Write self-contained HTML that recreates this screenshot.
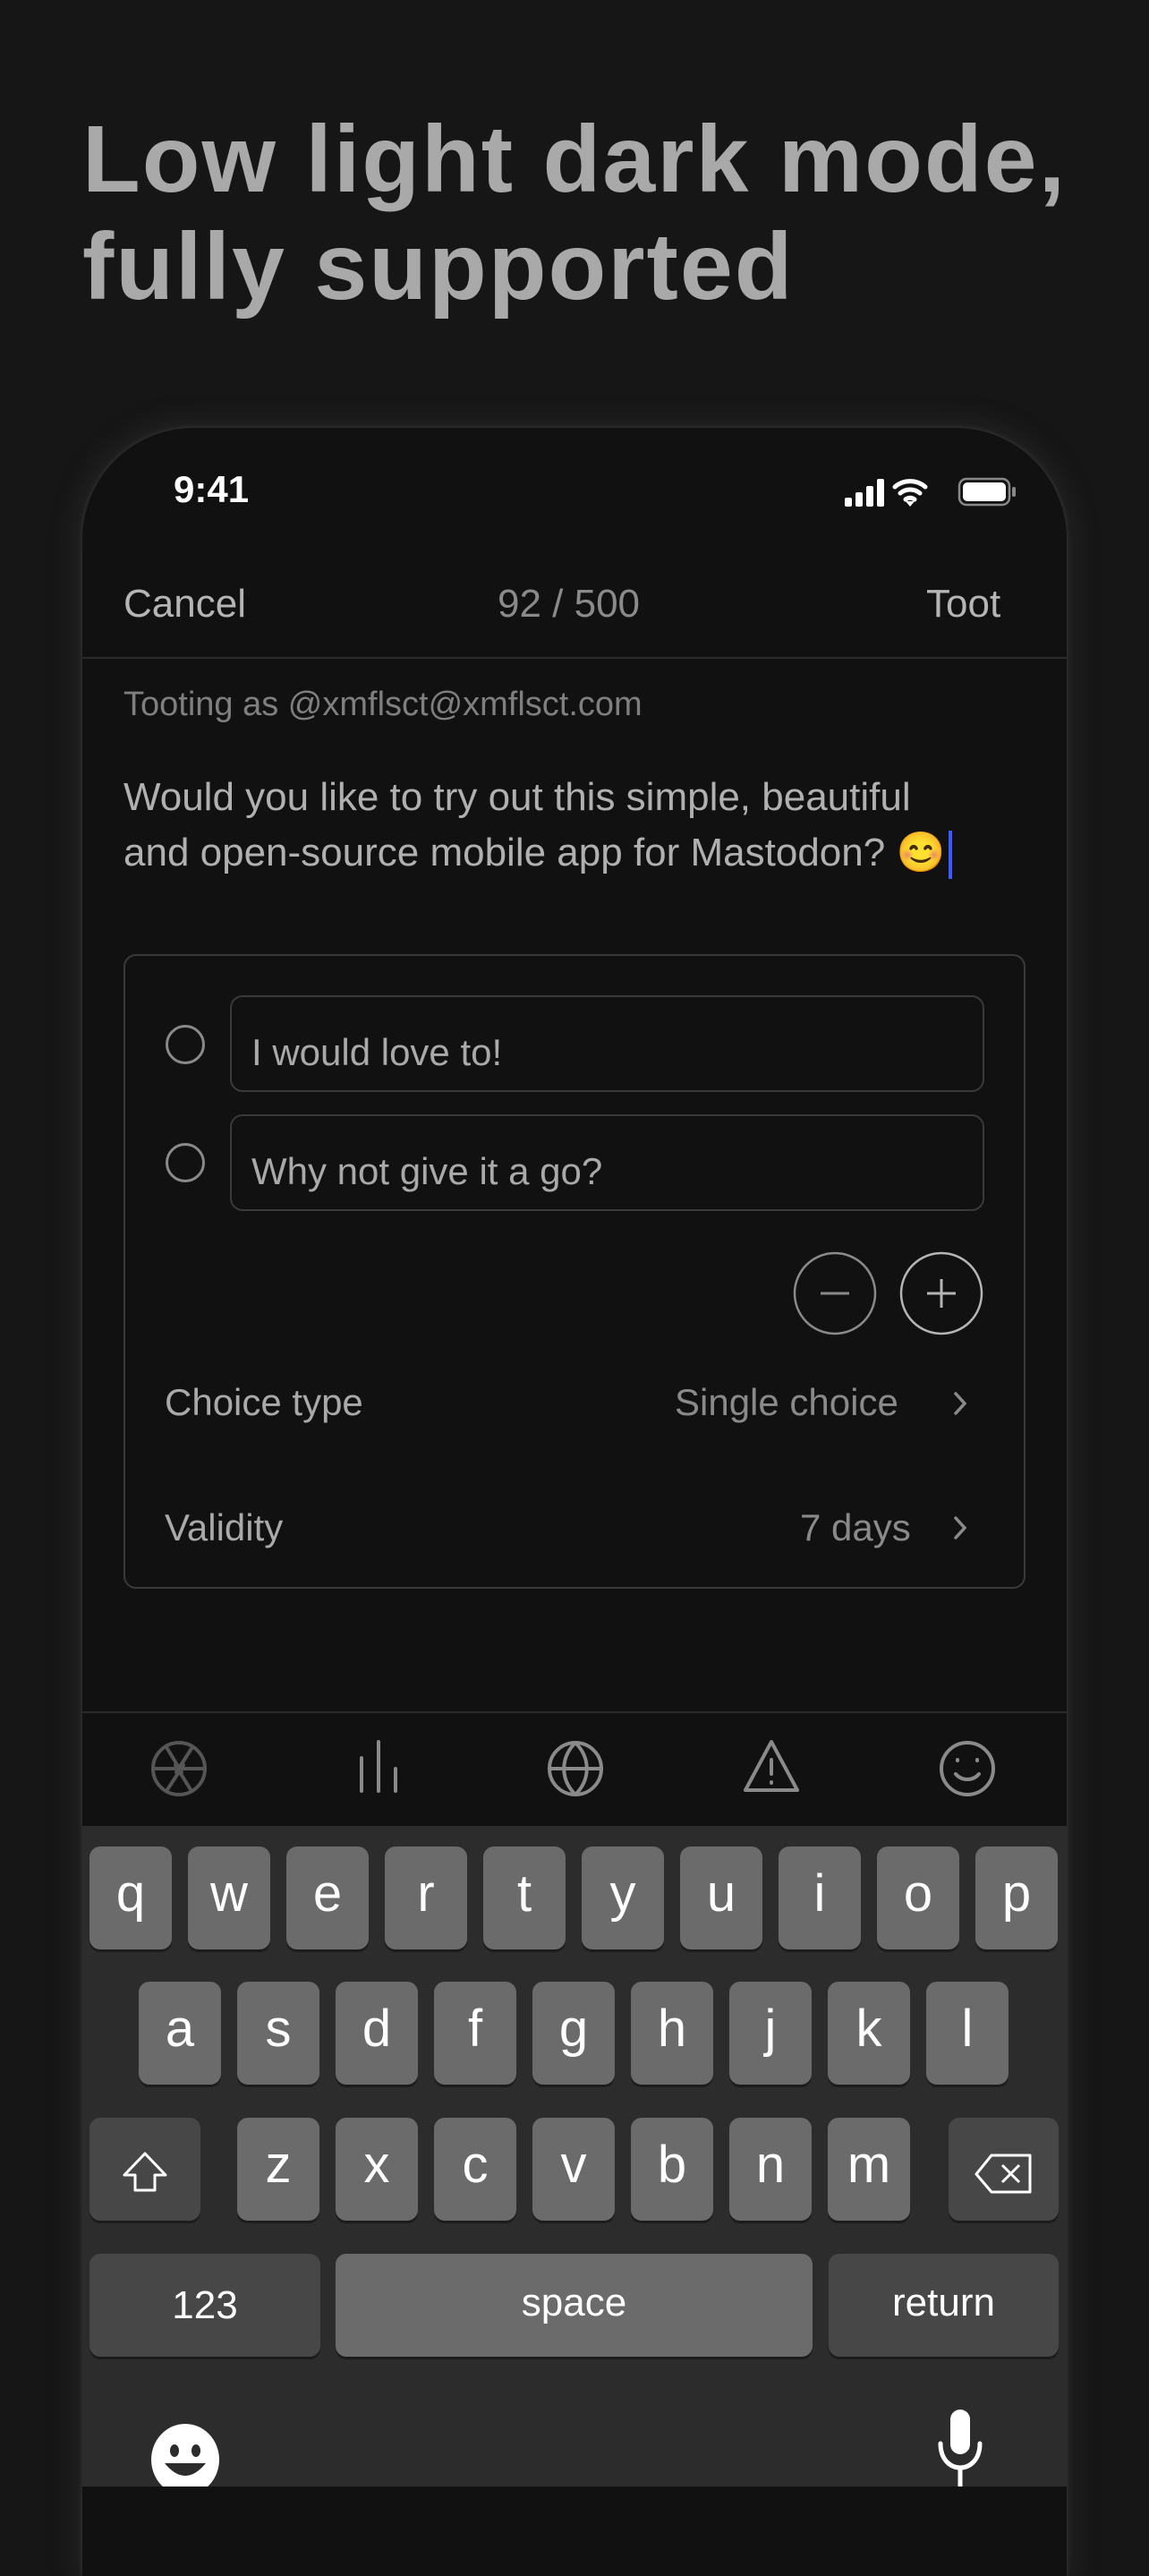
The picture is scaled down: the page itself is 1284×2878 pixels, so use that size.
<!DOCTYPE html>
<html><head><meta charset="utf-8"><style>
*{margin:0;padding:0;box-sizing:border-box}
body{width:1284px;height:2778px;background:#161616;overflow:hidden;position:relative;font-family:"Liberation Sans",sans-serif}
.abs{position:absolute}
h1{position:absolute;left:92px;top:118px;font-size:106px;line-height:120px;font-weight:bold;color:#a9a9a9;letter-spacing:2px}
.phone{position:absolute;left:92px;top:478px;width:1100px;height:2400px;background:#111;border-radius:124px 124px 0 0;box-shadow:0 0 30px 6px rgba(70,70,70,.35),0 0 4px 1px #2e2e2e}
.t{position:absolute;color:#a9a9a9;font-size:44px;white-space:nowrap}
.inp{position:absolute;left:257px;width:843px;height:108px;border:2px solid #3a3a3a;border-radius:14px}
.radio{position:absolute;left:185px;width:44px;height:44px;border:3px solid #8a8a8a;border-radius:50%}
.key{position:absolute;width:92px;height:115px;background:#6b6b6b;border-radius:12px;box-shadow:0 3px 0 #1c1c1c;color:#fff;font-size:58px;text-align:center;line-height:105px}
.sp{background:#474747}
</style></head><body>
<h1>Low light dark mode,<br>fully supported</h1>
<div class="phone"></div>
<div class="t" style="left:194px;top:523px;color:#fff;font-weight:bold;font-size:42px">9:41</div>
<svg class="abs" style="left:944px;top:532px" width="200" height="36" viewBox="0 0 200 36">
<rect x="0" y="24" width="8" height="10" rx="2" fill="#fff"/><rect x="12" y="18" width="8" height="16" rx="2" fill="#fff"/><rect x="24" y="11" width="8" height="23" rx="2" fill="#fff"/><rect x="36" y="3" width="8" height="31" rx="2" fill="#fff"/>
<path d="M56 12 A26 26 0 0 1 90 12 M62 19 A17 17 0 0 1 84 19 M68 26 A8 8 0 0 1 78 26" stroke="#fff" stroke-width="5" fill="none" stroke-linecap="round"/><path d="M68 28 L73 34 L78 28Z" fill="#fff"/>
<rect x="128" y="3" width="56" height="29" rx="8" fill="none" stroke="#888" stroke-width="2.5"/><rect x="132" y="7" width="48" height="21" rx="5" fill="#fff"/><rect x="187" y="12" width="4" height="11" rx="2" fill="#888"/>
</svg>
<div class="t" style="left:138px;top:650px;color:#b5b5b5">Cancel</div>
<div class="t" style="left:556px;top:650px;color:#8a8a8a">92 / 500</div>
<div class="t" style="left:1035px;top:650px;color:#b5b5b5">Toot</div>
<div class="abs" style="left:92px;top:734px;width:1100px;height:2px;background:#2a2a2a"></div>
<div class="t" style="left:138px;top:766px;font-size:38px;color:#7f7f7f">Tooting as @xmflsct@xmflsct.com</div>
<div class="t" style="left:138px;top:860px;line-height:62px;color:#b0b0b0">Would you like to try out this simple, beautiful<br>and open-source mobile app for Mastodon? <span style="font-size:44px">😊</span><span style="display:inline-block;width:4px;height:54px;background:#3b5bff;vertical-align:middle;margin-left:4px"></span></div>
<div class="abs" style="left:138px;top:1066px;width:1008px;height:709px;border:2px solid #3a3a3a;border-radius:14px"></div>
<div class="radio" style="top:1145px"></div><div class="inp" style="top:1112px"></div>
<div class="t" style="left:281px;top:1152px;font-size:42px;color:#a9a9a9">I would love to!</div>
<div class="radio" style="top:1277px"></div><div class="inp" style="top:1245px"></div>
<div class="t" style="left:281px;top:1285px;font-size:42px;color:#a9a9a9">Why not give it a go?</div>
<svg class="abs" style="left:884px;top:1396px" width="220" height="100"><circle cx="49" cy="49" r="45" fill="none" stroke="#8a8a8a" stroke-width="2.5"/><path d="M33 49H65" stroke="#8a8a8a" stroke-width="3"/><circle cx="168" cy="49" r="45" fill="none" stroke="#b5b5b5" stroke-width="2.5"/><path d="M152 49H184M168 33V65" stroke="#b5b5b5" stroke-width="3"/></svg>
<div class="t" style="left:184px;top:1543px;font-size:42px">Choice type</div>
<div class="t" style="left:754px;top:1543px;font-size:42px;color:#8a8a8a">Single choice</div>
<div class="t" style="left:184px;top:1683px;font-size:42px">Validity</div>
<div class="t" style="left:894px;top:1683px;font-size:42px;color:#8a8a8a">7 days</div>
<svg class="abs" style="left:1062px;top:1552px" width="24" height="180"><path d="M6 5L16 16L6 27M6 144L16 155L6 166" stroke="#8a8a8a" stroke-width="3.5" fill="none" stroke-linecap="round"/></svg>
<div class="abs" style="left:92px;top:1912px;width:1100px;height:2px;background:#2a2a2a"></div>
<svg class="abs" style="left:92px;top:1914px" width="1100" height="126" viewBox="0 0 1100 126">
<g fill="none" stroke-width="4" stroke-linecap="round" stroke-linejoin="round">
<g stroke="#555"><circle cx="108" cy="62" r="29"/><path d="M94 38L111 66M123 38L105 66M135 62H102M122 87L104 58M94 87L113 58M81 62H114"/></g>
<g stroke="#8a8a8a"><path d="M312 50V87M331 32V87M350 62V87"/><circle cx="551" cy="62" r="29"/><path d="M522 62H580M551 33C534 50 534 74 551 91M551 33C568 50 568 74 551 91"/>
<path d="M770 32L741 86H799Z"/><path d="M770 52V68M770 77V78"/>
<circle cx="989" cy="62" r="29"/><path d="M976 68C983 76 995 76 1002 68M978 52V53M1000 52V53"/></g></g></svg>
<div class="abs" style="left:92px;top:2040px;width:1100px;height:738px;background:#2c2c2c"></div>
<div class="key" style="left:100px;top:2063px">q</div><div class="key" style="left:210px;top:2063px">w</div><div class="key" style="left:320px;top:2063px">e</div><div class="key" style="left:430px;top:2063px">r</div><div class="key" style="left:540px;top:2063px">t</div><div class="key" style="left:650px;top:2063px">y</div><div class="key" style="left:760px;top:2063px">u</div><div class="key" style="left:870px;top:2063px">i</div><div class="key" style="left:980px;top:2063px">o</div><div class="key" style="left:1090px;top:2063px">p</div>
<div class="key" style="left:155px;top:2214px">a</div><div class="key" style="left:265px;top:2214px">s</div><div class="key" style="left:375px;top:2214px">d</div><div class="key" style="left:485px;top:2214px">f</div><div class="key" style="left:595px;top:2214px">g</div><div class="key" style="left:705px;top:2214px">h</div><div class="key" style="left:815px;top:2214px">j</div><div class="key" style="left:925px;top:2214px">k</div><div class="key" style="left:1035px;top:2214px">l</div>
<div class="key sp" style="left:100px;top:2366px;width:124px"></div>
<svg class="abs" style="left:134px;top:2402px" width="60" height="50"><path d="M28 4L5 28H17V45H39V28H51Z" fill="none" stroke="#fff" stroke-width="3" stroke-linejoin="round"/></svg>
<div class="key" style="left:265px;top:2366px">z</div><div class="key" style="left:375px;top:2366px">x</div><div class="key" style="left:485px;top:2366px">c</div><div class="key" style="left:595px;top:2366px">v</div><div class="key" style="left:705px;top:2366px">b</div><div class="key" style="left:815px;top:2366px">n</div><div class="key" style="left:925px;top:2366px">m</div>
<div class="key sp" style="left:1060px;top:2366px;width:123px"></div>
<svg class="abs" style="left:1088px;top:2404px" width="70" height="50"><path d="M20 4H63V45H20L3 25Z" fill="none" stroke="#fff" stroke-width="3" stroke-linejoin="round"/><path d="M32 15L51 34M51 15L32 34" stroke="#fff" stroke-width="3"/></svg>
<div class="key sp" style="left:100px;top:2518px;width:258px;font-size:44px;line-height:115px">123</div>
<div class="key" style="left:375px;top:2518px;width:533px;font-size:44px;line-height:110px">space</div>
<div class="key sp" style="left:926px;top:2518px;width:257px;font-size:44px;line-height:110px">return</div>
<svg class="abs" style="left:168px;top:2706px" width="80" height="72"><ellipse cx="39" cy="42" rx="38" ry="40" fill="#fff"/><ellipse cx="27" cy="32" rx="5" ry="7" fill="#2c2c2c"/><ellipse cx="51" cy="32" rx="5" ry="7" fill="#2c2c2c"/><path d="M16 46Q39 74 62 46Z" fill="#2c2c2c"/></svg>
<svg class="abs" style="left:1046px;top:2690px" width="56" height="88"><rect x="16" y="2" width="22" height="50" rx="11" fill="#fff"/><path d="M5 40C5 76 49 76 49 40M27 68V88" stroke="#fff" stroke-width="5" fill="none" stroke-linecap="round"/></svg>
</body></html>
